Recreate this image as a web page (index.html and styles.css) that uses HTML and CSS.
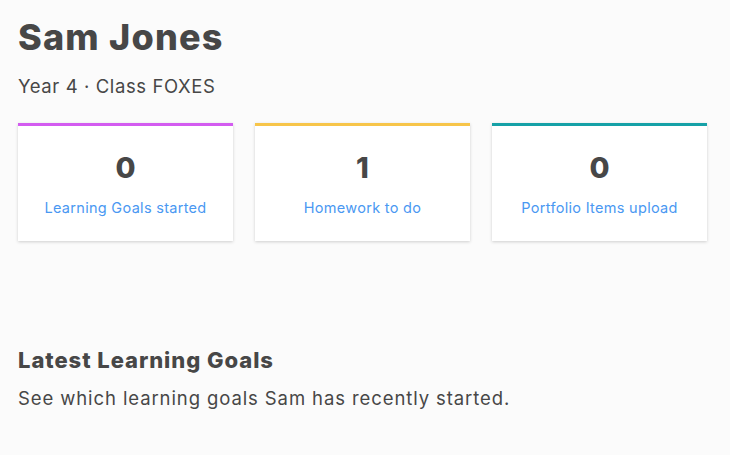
FILE: index.html
```html
<!DOCTYPE html>
<html lang="en">
<head>
<meta charset="utf-8">
<title>Sam Jones</title>
<link rel="stylesheet" href="styles.css">
</head>
<body>
<main class="page">
  <header class="profile">
    <h1 class="profile-name">Sam Jones</h1>
    <p class="profile-meta">Year 4 · Class FOXES</p>
  </header>
  <section class="stats">
    <a class="stat stat-goals" href="#">
      <span class="stat-value">0</span>
      <span class="stat-label">Learning Goals started</span>
    </a>
    <a class="stat stat-homework" href="#">
      <span class="stat-value">1</span>
      <span class="stat-label">Homework to do</span>
    </a>
    <a class="stat stat-portfolio" href="#">
      <span class="stat-value">0</span>
      <span class="stat-label">Portfolio Items upload</span>
    </a>
  </section>
  <section class="latest">
    <h2 class="latest-title">Latest Learning Goals</h2>
    <p class="latest-text">See which learning goals Sam has recently started.</p>
  </section>
</main>
</body>
</html>
```

FILE: styles.css
```css
html, body {
  margin: 0;
  padding: 0;
  background: #fbfbfb;
}
body {
  font-family: Inter, "Noto Sans", sans-serif;
  color: #474747;
}
.page {
  padding: 15px 23px 0 18px;
}
.profile-name {
  margin: 0;
  font-size: 36px;
  line-height: 44px;
  font-weight: 800;
  letter-spacing: 1.2px;
}
.profile-meta {
  margin: 15px 0 0;
  font-size: 18.5px;
  line-height: 24px;
  letter-spacing: 0.6px;
}
.stats {
  margin-top: 25px;
  display: grid;
  grid-template-columns: repeat(3, 1fr);
  gap: 22px;
}
.stat {
  display: flex;
  flex-direction: column;
  align-items: center;
  height: 115px;
  background: #fff;
  border-top: 3px solid #d35cf0;
  box-shadow: 0 1px 3px rgba(0, 0, 0, 0.18);
  text-decoration: none;
}
.stat-homework { border-top-color: #f7c54a; }
.stat-portfolio { border-top-color: #16a1a7; }
.stat-value {
  margin-top: 25px;
  font-size: 29px;
  line-height: 34px;
  font-weight: 800;
  color: #474747;
}
.stat-label {
  margin-top: 14px;
  font-size: 14.5px;
  line-height: 18px;
  letter-spacing: 0.3px;
  color: #4a98f2;
}
.latest {
  margin-top: 105px;
}
.latest-title {
  margin: 0;
  font-size: 22px;
  line-height: 28px;
  font-weight: 800;
  letter-spacing: 0.95px;
}
.latest-text {
  margin: 12px 0 0;
  font-size: 18.5px;
  line-height: 24px;
  letter-spacing: 0.9px;
}
```
